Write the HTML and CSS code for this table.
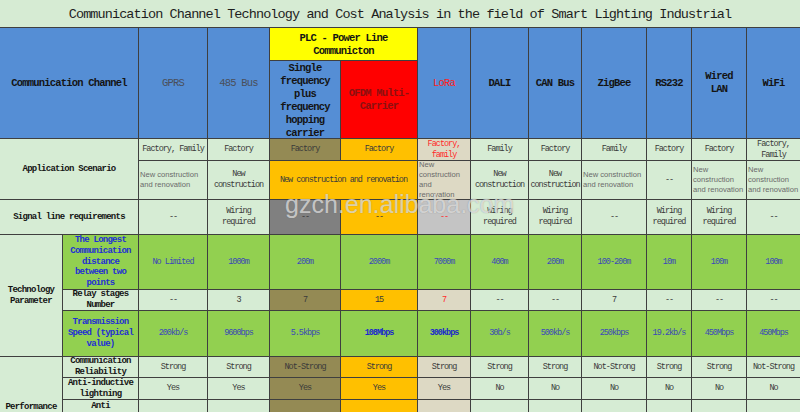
FILE: index.html
```html
<!DOCTYPE html>
<html>
<head>
<meta charset="utf-8">
<link rel="stylesheet" href="styles.css">
</head>
<body>
<div class="page">
  <div class="sheet">
    <div class="c title">Communication Channel Technology and Cost Analysis in the field of Smart Lighting Industrial</div>

    <div class="c hd cs2 rs2">Communication Channel</div>
    <div class="c hd rs2 dim">GPRS</div>
    <div class="c hd rs2 dim">485 Bus</div>
    <div class="c hd cs2 plc">PLC - Power Line Communicton</div>
    <div class="c hd rs2 lora">LoRa</div>
    <div class="c hd rs2">DALI</div>
    <div class="c hd rs2">CAN Bus</div>
    <div class="c hd rs2">ZigBee</div>
    <div class="c hd rs2">RS232</div>
    <div class="c hd rs2">Wired<br>LAN</div>
    <div class="c hd rs2">WiFi</div>
    <div class="c hd single">Single frequency plus frequency hopping carrier</div>
    <div class="c hd ofdm">OFDM Multi-Carrier</div>

    <div class="c lbl cs2 rs2">Application Scenario</div>
    <div class="c">Factory, Family</div>
    <div class="c">Factory</div>
    <div class="c brown">Factory</div>
    <div class="c orange">Factory</div>
    <div class="c tan red">Factory, family</div>
    <div class="c">Family</div>
    <div class="c">Factory</div>
    <div class="c">Family</div>
    <div class="c">Factory</div>
    <div class="c">Factory</div>
    <div class="c">Factory, Family</div>

    <div class="c sans">New construction and renovation</div>
    <div class="c">New construction</div>
    <div class="c cs2 orange">New construction and renovation</div>
    <div class="c sans tan">New construction and renovation</div>
    <div class="c">New construction</div>
    <div class="c">New construction</div>
    <div class="c sans">New construction and renovation</div>
    <div class="c">--</div>
    <div class="c sans">New construction and renovation</div>
    <div class="c sans">New construction and renovation</div>

    <div class="c lbl cs2">Signal line requirements</div>
    <div class="c">--</div>
    <div class="c">Wiring required</div>
    <div class="c gray">--</div>
    <div class="c orange">--</div>
    <div class="c lgray red">--</div>
    <div class="c">Wiring required</div>
    <div class="c">Wiring required</div>
    <div class="c">--</div>
    <div class="c">Wiring required</div>
    <div class="c">Wiring required</div>
    <div class="c">--</div>

    <div class="c lbl rs3">Technology Parameter</div>
    <div class="c lbl green blbl">The Longest Communication distance between two points</div>
    <div class="c green bv">No Limited</div>
    <div class="c green bv">1000m</div>
    <div class="c green bv">200m</div>
    <div class="c green bv">2000m</div>
    <div class="c green bv">7000m</div>
    <div class="c green bv">400m</div>
    <div class="c green bv">200m</div>
    <div class="c green bv">100-200m</div>
    <div class="c green bv">10m</div>
    <div class="c green bv">100m</div>
    <div class="c green bv">100m</div>

    <div class="c lbl">Relay stages Number</div>
    <div class="c">--</div>
    <div class="c">3</div>
    <div class="c brown">7</div>
    <div class="c orange">15</div>
    <div class="c tan red">7</div>
    <div class="c">--</div>
    <div class="c">--</div>
    <div class="c">7</div>
    <div class="c">--</div>
    <div class="c">--</div>
    <div class="c">--</div>

    <div class="c lbl green blbl">Transmission Speed (typical value)</div>
    <div class="c green bv">200kb/s</div>
    <div class="c green bv">9600bps</div>
    <div class="c green bv">5.5kbps</div>
    <div class="c green bv strong">108Mbps</div>
    <div class="c green bv strong">300kbps</div>
    <div class="c green bv">30b/s</div>
    <div class="c green bv">500kb/s</div>
    <div class="c green bv">250kbps</div>
    <div class="c green bv">19.2kb/s</div>
    <div class="c green bv">450Mbps</div>
    <div class="c green bv">450Mbps</div>

    <div class="c lbl rs4 perf">Performance</div>
    <div class="c lbl">Communication Reliability</div>
    <div class="c">Strong</div>
    <div class="c">Strong</div>
    <div class="c brown">Not-Strong</div>
    <div class="c orange">Strong</div>
    <div class="c tan">Strong</div>
    <div class="c">Strong</div>
    <div class="c">Strong</div>
    <div class="c">Not-Strong</div>
    <div class="c">Strong</div>
    <div class="c">Strong</div>
    <div class="c">Not-Strong</div>

    <div class="c lbl">Anti-inductive lightning</div>
    <div class="c">Yes</div>
    <div class="c">Yes</div>
    <div class="c brown">Yes</div>
    <div class="c orange">Yes</div>
    <div class="c tan">Yes</div>
    <div class="c">No</div>
    <div class="c">No</div>
    <div class="c">No</div>
    <div class="c">No</div>
    <div class="c">No</div>
    <div class="c">No</div>

    <div class="c lbl top">Anti</div>
    <div class="c"></div>
    <div class="c"></div>
    <div class="c brown"></div>
    <div class="c orange"></div>
    <div class="c tan"></div>
    <div class="c"></div>
    <div class="c"></div>
    <div class="c"></div>
    <div class="c"></div>
    <div class="c"></div>
    <div class="c"></div>
  </div>
  <div class="watermark">gzch.en.alibaba.com</div>
</div>
</body>
</html>
```
FILE: styles.css
```css
html, body {
  margin: 0;
  padding: 0;
  background: #ffffff;
}

.page {
  position: relative;
  width: 800px;
  height: 412px;
  overflow: hidden;
}

.sheet {
  display: grid;
  grid-template-columns: 62px 75px 68px 61px 70px 76px 52px 57px 52px 64px 44px 54px 53px;
  grid-template-rows: 27px 32px 77px 21px 38px 34px 54px 20px 45px 20px 21px 34px 23px;
  gap: 1px;
  background: #3f3f3f;
  width: 800px;
}

.c {
  display: flex;
  align-items: center;
  justify-content: center;
  text-align: center;
  background: #d6ecd4;
  color: #3a3a3a;
  font-family: "Liberation Mono", "DejaVu Sans Mono", monospace;
  font-size: 8.5px;
  line-height: 11px;
  letter-spacing: -1px;
  padding: 0 2px;
  overflow: hidden;
}

.title {
  grid-column: 1 / -1;
  background: #d6ebd3;
  color: #1e1e1e;
  font-size: 13.5px;
  letter-spacing: -0.9px;
  padding-top: 2px;
}

.cs2 { grid-column: span 2; }
.rs2 { grid-row: span 2; }
.rs3 { grid-row: span 3; }
.rs4 { grid-row: span 4; }

.hd {
  background: #558ed5;
  color: #141414;
  font-weight: bold;
  font-size: 10.5px;
  line-height: 13px;
  letter-spacing: -0.8px;
  overflow: visible;
}

.hd.dim {
  font-weight: normal;
  color: #4a4f5a;
}

.hd.plc {
  background: #ffff00;
  padding-top: 1px;
}

.hd.lora {
  color: #ff2020;
  font-weight: normal;
}

.hd.ofdm {
  background: #ff0000;
  color: #8c1010;
}

.hd.single {
  padding-top: 2px;
}

.lbl {
  font-weight: bold;
  color: #151515;
  font-size: 9px;
  letter-spacing: -0.75px;
  line-height: 10.7px;
}

.lbl.top {
  align-items: flex-start;
  padding-top: 1px;
}

.blbl {
  color: #1f2fd4;
}

.green { background: #92d050; }

.bv {
  color: #3a48b8;
}

.bv.strong {
  font-weight: bold;
  color: #1a28cc;
}

.brown { background: #948a54; }
.orange { background: #ffc000; }
.tan { background: #ddd9c4; }
.gray { background: #808080; }
.lgray { background: #c4c4c4; }
.red { color: #ff2a2a; }

.sans {
  font-family: "Liberation Sans", Arial, sans-serif;
  font-size: 7.6px;
  letter-spacing: 0;
  line-height: 10px;
  color: #6a6a6a;
  text-align: left;
  justify-content: flex-start;
  padding: 0 1px;
}

.watermark {
  position: absolute;
  left: 285px;
  top: 192px;
  font-family: "Liberation Sans", Arial, sans-serif;
  font-size: 25px;
  line-height: 25px;
  color: rgba(255, 255, 255, 0.62);
  text-shadow: 0 0 1px rgba(90, 90, 90, 0.55);
  pointer-events: none;
  white-space: nowrap;
}
```
